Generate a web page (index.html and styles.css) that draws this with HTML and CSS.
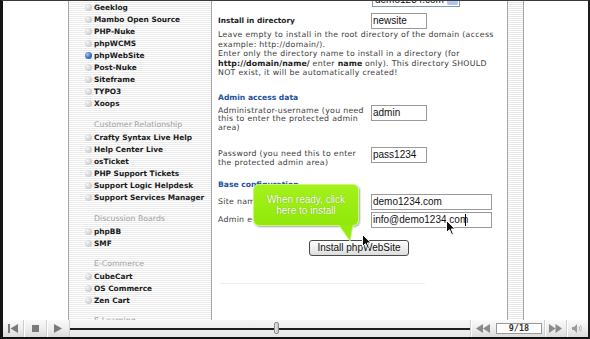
FILE: index.html
```html
<!DOCTYPE html>
<html>
<head>
<meta charset="utf-8">
<link rel="stylesheet" href="styles.css">
</head>
<body>
<div class="screen">
  <div class="viewport">
    <div class="gutter"></div>
    <nav class="sidebar">
      <div class="item"><span class="dot"></span>Geeklog</div>
      <div class="item"><span class="dot"></span>Mambo Open Source</div>
      <div class="item"><span class="dot"></span>PHP-Nuke</div>
      <div class="item"><span class="dot"></span>phpWCMS</div>
      <div class="item"><span class="dot dot-on"></span>phpWebSite</div>
      <div class="item"><span class="dot"></span>Post-Nuke</div>
      <div class="item"><span class="dot"></span>Siteframe</div>
      <div class="item"><span class="dot"></span>TYPO3</div>
      <div class="item"><span class="dot"></span>Xoops</div>
      <div class="cat">Customer Relationship</div>
      <div class="item"><span class="dot"></span>Crafty Syntax Live Help</div>
      <div class="item"><span class="dot"></span>Help Center Live</div>
      <div class="item"><span class="dot"></span>osTicket</div>
      <div class="item"><span class="dot"></span>PHP Support Tickets</div>
      <div class="item"><span class="dot"></span>Support Logic Helpdesk</div>
      <div class="item"><span class="dot"></span>Support Services Manager</div>
      <div class="cat">Discussion Boards</div>
      <div class="item"><span class="dot"></span>phpBB</div>
      <div class="item"><span class="dot"></span>SMF</div>
      <div class="cat cat-tight">E-Commerce</div>
      <div class="item"><span class="dot"></span>CubeCart</div>
      <div class="item"><span class="dot"></span>OS Commerce</div>
      <div class="item"><span class="dot"></span>Zen Cart</div>
      <div class="cat cat-tight">E-Learning</div>
    </nav>
    <main class="main">
      <div class="row row-domain">
        <span class="lbl lbl-b">Install on domain</span>
        <div class="select"><span class="sel-text">demo1234.com</span><span class="sel-btn"></span></div>
      </div>
      <div class="row row-dir">
        <span class="lbl lbl-b">Install in directory</span>
        <div class="input">newsite</div>
      </div>
      <p class="note">Leave empty to install in the root directory of the domain (access<br>example: http://domain/).<br>Enter only the directory name to install in a directory (for<br><b>http://domain/name/</b> enter <b>name</b> only). This directory SHOULD<br>NOT exist, it will be automatically created!</p>
      <h3 class="sec sec-admin">Admin access data</h3>
      <div class="row row-user">
        <span class="lbl lbl-multi">Administrator-username (you need<br>this to enter the protected admin<br>area)</span>
        <div class="input">admin</div>
      </div>
      <div class="row row-pass">
        <span class="lbl lbl-multi lbl-pass">Password (you need this to enter<br>the protected admin area)</span>
        <div class="input">pass1234</div>
      </div>
      <h3 class="sec sec-base">Base configuration</h3>
      <div class="row row-site">
        <span class="lbl">Site name</span>
        <div class="input input-wide">demo1234.com</div>
      </div>
      <div class="row row-email">
        <span class="lbl">Admin e-mail (for notifications)</span>
        <div class="input input-wide">info@demo1234.com<span class="caret"></span></div>
      </div>
      <div class="btn-row"><span class="btn">Install phpWebSite</span></div>
      <div class="rule"></div>
    </main>
    <div class="strip"></div>
    <div class="rightpad"></div>

    <div class="callout">
      <span>When ready, click<br>here to install</span>
      <svg class="tail" width="20" height="17" viewBox="0 0 20 17"><polygon points="1,0 15,0 12,16" fill="#96ea10"/><polyline points="1,0.5 12,16 15,0.5" fill="none" stroke="#c9f77a" stroke-width="1"/></svg>
    </div>
    <svg class="cursor cursor-a" width="11" height="16" viewBox="0 0 11 16"><path d="M0.5 0.5 L0.5 12.5 L3.5 9.7 L5.6 14.6 L7.4 13.8 L5.3 9 L9.2 9 Z" fill="#111" stroke="#fff" stroke-width="1"/></svg>
    <svg class="cursor cursor-b" width="11" height="16" viewBox="0 0 11 16"><path d="M0.5 0.5 L0.5 12.5 L3.5 9.7 L5.6 14.6 L7.4 13.8 L5.3 9 L9.2 9 Z" fill="#111" stroke="#fff" stroke-width="1"/></svg>
  </div>

  <div class="player">
    <div class="pbtn pb-first"><svg width="11" height="9" viewBox="0 0 11 9"><rect x="0" y="0" width="2" height="9" fill="#7a7a7a"/><polygon points="10,0 10,9 2.5,4.5" fill="#7a7a7a"/></svg></div>
    <div class="pbtn pb-mid"><svg width="7" height="7" viewBox="0 0 7 7"><rect width="7" height="7" fill="#7a7a7a"/></svg></div>
    <div class="pbtn pb-mid"><svg width="8" height="9" viewBox="0 0 8 9"><polygon points="0,0 8,4.5 0,9" fill="#7a7a7a"/></svg></div>
    <div class="track"><div class="track-line"></div><div class="handle" style="left:204px"></div></div>
    <div class="pbtn pb-rew"><svg width="14" height="9" viewBox="0 0 14 9"><polygon points="7,0 7,9 0,4.5" fill="#8a8a8a"/><polygon points="14,0 14,9 7,4.5" fill="#8a8a8a"/></svg></div>
    <div class="counter"><span class="counter-box">9/18</span></div>
    <div class="pbtn pb-ff"><svg width="13" height="9" viewBox="0 0 13 9"><polygon points="0,0 6.5,4.5 0,9" fill="#8a8a8a"/><polygon points="6.5,0 13,4.5 6.5,9" fill="#8a8a8a"/></svg></div>
    <div class="pbtn pb-vol"><svg width="11" height="9" viewBox="0 0 11 9"><polygon points="0,3 2,3 5,0 5,9 2,6 0,6" fill="#9a9a9a"/><path d="M7 2.5 Q8.3 4.5 7 6.5" fill="none" stroke="#aaa" stroke-width="1"/><path d="M8.5 1 Q10.6 4.5 8.5 8" fill="none" stroke="#bbb" stroke-width="1"/></svg></div>
  </div>
</div>
</body>
</html>
```
FILE: styles.css
```css
html, body {
  margin: 0;
  padding: 0;
  background: #fff;
}
.screen {
  width: 590px;
  height: 339px;
  box-sizing: border-box;
  border-left: 3px solid #141414;
  border-top: 1px solid #3a3a3a;
  border-right: 2px solid #1c1c1c;
  border-bottom: 2px solid #111;
  display: flex;
  flex-direction: column;
  background: #fff;
  overflow: hidden;
}
.viewport {
  position: relative;
  height: 319px;
  flex: none;
  display: flex;
  overflow: hidden;
}
.gutter {
  width: 65px;
  flex: none;
}
.sidebar {
  width: 142px;
  flex: none;
  border-left: 1px solid #a6a6a6;
  border-right: 1px solid #a6a6a6;
  background: repeating-linear-gradient(to bottom, #fff 0, #fff 1px, #ececec 1px, #ececec 2px);
  font-family: "DejaVu Sans", Verdana, sans-serif;
  font-size: 7.4px;
  font-weight: bold;
  color: #1a1a1a;
}
.item {
  height: 12px;
  display: flex;
  align-items: center;
  gap: 2px;
  padding-left: 16px;
  white-space: nowrap;
}
.dot {
  width: 7px;
  height: 7px;
  flex: none;
  border-radius: 50%;
  background: radial-gradient(circle at 35% 35%, #f6f6f6 0, #d4d4d4 55%, #c0c0c0 100%);
}
.dot-on {
  background: radial-gradient(circle at 35% 35%, #a9c6f0 0, #3b6dc2 55%, #1d4a96 100%);
}
.cat {
  height: 12px;
  line-height: 12px;
  margin-top: 10px;
  padding-left: 25px;
  font-weight: normal;
  font-size: 7.8px;
  color: #a2a2a2;
  white-space: nowrap;
}
.cat-tight {
  margin-top: 9px;
}
.main {
  width: 289px;
  flex: none;
  padding-left: 6px;
  font-family: "DejaVu Sans", Verdana, sans-serif;
  font-size: 7.8px;
  letter-spacing: 0.3px;
  color: #3a3a3a;
}
.row {
  display: flex;
  align-items: center;
}
.lbl {
  width: 153px;
  flex: none;
  white-space: nowrap;
  line-height: 10px;
}
.lbl-b {
  font-weight: bold;
  color: #222;
  font-size: 7.4px;
  letter-spacing: 0;
}
.lbl-multi {
  line-height: 8.7px;
  padding-top: 1.6px;
}
.lbl-pass {
  line-height: 9px;
  padding-top: 1.5px;
}
.row-domain {
  height: 16px;
  margin-top: -10px;
}
.row-dir {
  height: 16px;
  margin-top: 6px;
}
.note {
  margin: 1px 0 0;
  line-height: 9.5px;
  white-space: nowrap;
}
.note b {
  color: #222;
  letter-spacing: 0.1px;
}
.sec {
  margin: 15.5px 0 0;
  font-size: 7.6px;
  line-height: 10px;
  font-weight: bold;
  letter-spacing: 0;
  color: #23539f;
}
.sec-base {
  margin-top: 13.5px;
}
.row-user {
  margin-top: 2px;
  align-items: flex-start;
}
.row-pass {
  margin-top: 14.3px;
  align-items: flex-start;
}
.row-site {
  margin-top: 4px;
  height: 16px;
}
.row-email {
  margin-top: 2px;
  height: 16px;
}
.input {
  box-sizing: border-box;
  width: 56px;
  height: 16px;
  border: 1px solid #9a9a9a;
  background: #fff;
  font-family: "Liberation Sans", Arial, sans-serif;
  font-size: 10px;
  letter-spacing: 0;
  line-height: 14px;
  padding-left: 1px;
  color: #111;
  white-space: nowrap;
  display: flex;
  align-items: center;
}
.input-wide {
  width: 121px;
}
.caret {
  display: inline-block;
  width: 0;
  height: 12px;
  border-left: 1px solid #000;
  margin-left: -3px;
}
.select {
  box-sizing: border-box;
  width: 88px;
  height: 16px;
  margin-left: 1px;
  border: 1px solid #7f9db9;
  background: #fff;
  display: flex;
  align-items: center;
  font-family: "Liberation Sans", Arial, sans-serif;
  font-size: 10px;
  letter-spacing: 0;
  color: #111;
}
.sel-text {
  flex: 1;
  padding-left: 2px;
}
.sel-btn {
  width: 11px;
  height: 12px;
  margin-right: 1px;
  border-radius: 1px;
  background: linear-gradient(#dbe6fd, #a9c0f2);
  border: 1px solid #b7c9f0;
  box-sizing: border-box;
}
.btn-row {
  margin-top: 12px;
  padding-left: 91px;
  display: flex;
}
.btn {
  box-sizing: border-box;
  width: 100px;
  height: 16px;
  border: 1px solid #4a4a4a;
  border-radius: 3px;
  background: linear-gradient(#ffffff, #ececec 60%, #dcdcdc);
  font-family: "Liberation Sans", Arial, sans-serif;
  font-size: 10px;
  letter-spacing: 0;
  line-height: 14px;
  text-align: center;
  color: #111;
}
.rule {
  margin-top: 27px;
  margin-left: 2px;
  width: 205px;
  height: 1px;
  background: #efefef;
}
.strip {
  width: 15px;
  flex: none;
  border-left: 1px solid #a6a6a6;
  border-right: 1px solid #a6a6a6;
  background: repeating-linear-gradient(to bottom, #fff 0, #fff 1px, #e6e6e6 1px, #e6e6e6 2px);
}
.rightpad {
  flex: 1;
}
.callout {
  position: absolute;
  left: 250px;
  top: 183px;
  width: 106px;
  height: 42px;
  box-sizing: border-box;
  border: 1px solid #c9f77a;
  border-radius: 6px;
  background: linear-gradient(#a4f21c, #92e80a);
  box-shadow: 1px 1px 2px rgba(0, 0, 0, 0.35);
  display: flex;
  align-items: center;
  justify-content: center;
  text-align: center;
  font-family: "Liberation Sans", Arial, sans-serif;
  font-size: 10px;
  line-height: 11px;
  color: #fff;
  text-shadow: 0 0 1px rgba(60, 90, 0, 0.6);
}
.tail {
  position: absolute;
  left: 84px;
  top: 40px;
}
.cursor {
  position: absolute;
}
.cursor-a {
  left: 359px;
  top: 233px;
}
.cursor-b {
  left: 443px;
  top: 219px;
}
.player {
  flex: none;
  height: 17px;
  display: flex;
  background: linear-gradient(#fafafa, #eeeeee 50%, #dadada);
}
.pbtn {
  flex: none;
  display: flex;
  align-items: center;
  justify-content: center;
  box-sizing: border-box;
}
.pb-first {
  width: 20px;
}
.pb-mid {
  width: 23px;
  border-left: 1px solid #cfcfcf;
  box-shadow: inset 1px 0 #fff;
}
.track {
  flex: 1;
  position: relative;
  border-left: 1px solid #cfcfcf;
  background: linear-gradient(#f6f6f6, #e6e6e6);
}
.track-line {
  margin-top: 8px;
  height: 2px;
  background: #1e1e1e;
}
.handle {
  position: absolute;
  top: 2px;
  width: 5px;
  height: 12px;
  box-sizing: border-box;
  border: 1px solid #8a8a8a;
  border-radius: 2px;
  background: linear-gradient(90deg, #e8e8e8, #c4c4c4);
}
.pb-rew {
  width: 24px;
  border-left: 1px solid #cfcfcf;
  box-shadow: inset 1px 0 #fff;
}
.counter {
  width: 50px;
  flex: none;
  display: flex;
  align-items: center;
  justify-content: center;
}
.counter-box {
  box-sizing: border-box;
  width: 46px;
  height: 11px;
  border: 1px solid #9a9a9a;
  background: #fff;
  font-family: "DejaVu Sans Mono", monospace;
  font-weight: bold;
  font-size: 8.5px;
  line-height: 9px;
  text-align: center;
  color: #333;
}
.pb-ff {
  width: 22px;
  border-left: 1px solid #cfcfcf;
  box-shadow: inset 1px 0 #fff;
}
.pb-vol {
  width: 22px;
  border-left: 1px solid #cfcfcf;
  box-shadow: inset 1px 0 #fff;
}
```
